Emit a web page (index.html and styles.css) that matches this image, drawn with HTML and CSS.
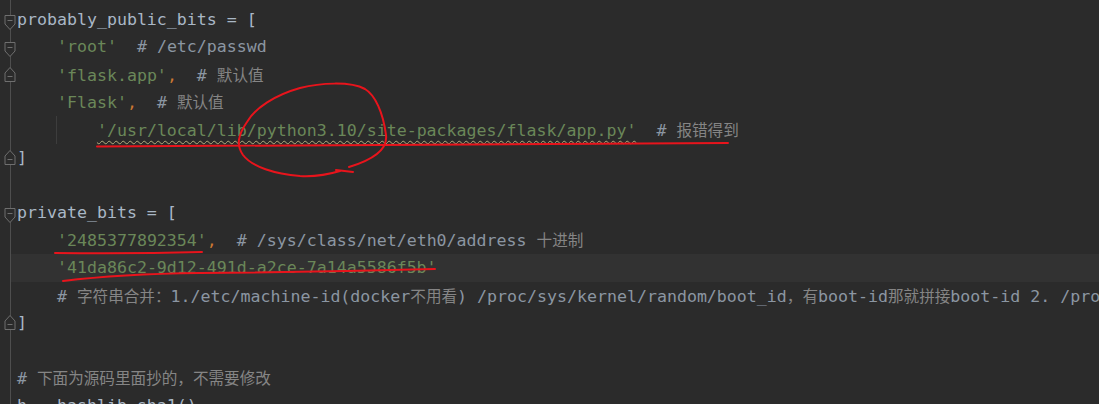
FILE: index.html
```html
<!DOCTYPE html>
<html lang="zh">
<head>
<meta charset="utf-8">
<title>editor</title>
<link rel="stylesheet" href="styles.css">
</head>
<body>
<div class="editor">
  <div class="line"><span class="fold"><svg class="mk down" width="12" height="16" viewBox="0 0 12 16"><path d="M1 0.5H11V9L6 14.5L1 9Z"/><path d="M3.5 5.5H8.5"/></svg></span><span class="code">probably_public_bits = [</span></div>
  <div class="line"><span class="fold"><svg class="mk down" width="12" height="16" viewBox="0 0 12 16"><path d="M1 0.5H11V9L6 14.5L1 9Z"/><path d="M3.5 5.5H8.5"/></svg></span><span class="code">    <span class="s">'root'</span>  <span class="c"># /etc/passwd</span></span></div>
  <div class="line"><span class="fold"><svg class="mk up" width="12" height="16" viewBox="0 0 12 16"><path d="M1 15.5H11V7L6 1.5L1 7Z"/><path d="M3.5 10.5H8.5"/></svg></span><span class="code">    <span class="s">'flask.app'</span><span class="k">,</span>  <span class="c"># <span class="zh">默认值</span></span></span></div>
  <div class="line"><span class="fold"></span><span class="code">    <span class="s">'Flask'</span><span class="k">,</span>  <span class="c"># <span class="zh">默认值</span></span></span></div>
  <div class="line guide"><span class="fold"></span><span class="code">        <span class="s warn">'/usr/local/lib/python3.10/site-packages/flask/app.py'</span>  <span class="c"># <span class="zh">报错得到</span></span></span></div>
  <div class="line"><span class="fold"><svg class="mk up" width="12" height="16" viewBox="0 0 12 16"><path d="M1 15.5H11V7L6 1.5L1 7Z"/><path d="M3.5 10.5H8.5"/></svg></span><span class="code">]</span></div>
  <div class="line"><span class="fold"></span><span class="code"></span></div>
  <div class="line"><span class="fold"><svg class="mk down" width="12" height="16" viewBox="0 0 12 16"><path d="M1 0.5H11V9L6 14.5L1 9Z"/><path d="M3.5 5.5H8.5"/></svg></span><span class="code">private_bits = [</span></div>
  <div class="line"><span class="fold"></span><span class="code">    <span class="s">'2485377892354'</span><span class="k">,</span>  <span class="c"># /sys/class/net/eth0/address <span class="zh">十进制</span></span></span></div>
  <div class="line current"><span class="fold"></span><span class="code">    <span class="s">'41da86c2-9d12-491d-a2ce-7a14a5586f5b'</span></span></div>
  <div class="line"><span class="fold"></span><span class="code">    <span class="c"># <span class="zh">字符串合并：</span>1./etc/machine-id(docker<span class="zh">不用看</span>) /proc/sys/kernel/random/boot_id<span class="zh">，有</span>boot-id<span class="zh">那就拼接</span>boot-id 2. /proc/self/cgroup</span></span></div>
  <div class="line"><span class="fold"><svg class="mk up" width="12" height="16" viewBox="0 0 12 16"><path d="M1 15.5H11V7L6 1.5L1 7Z"/><path d="M3.5 10.5H8.5"/></svg></span><span class="code">]</span></div>
  <div class="line"><span class="fold"></span><span class="code"></span></div>
  <div class="line"><span class="fold"></span><span class="code"><span class="c"># <span class="zh">下面为源码里面抄的，不需要修改</span></span></span></div>
  <div class="line"><span class="fold"></span><span class="code">h = hashlib.sha1()</span></div>

  <svg class="ink" width="1099" height="404" viewBox="0 0 1099 404">
    <path d="M97 146.5 Q 400 145 728 143"/>
    <path d="M349 167 C 372 160 388 150 386 135 C 383 112 375 95 365 89 C 350 81 320 83 300 88 C 275 95 255 108 247 122 C 238 135 236 145 243 155 C 252 167 275 174 300 176 C 318 177 330 174 340 171"/>
    <path d="M336 170 L 353 172"/>
    <path d="M55 253 Q 130 254 202 252"/>
    <path d="M63 281 Q 120 274 200 273 Q 320 272 435 269"/>
  </svg>
</div>
</body>
</html>
```

FILE: styles.css
```css
html, body {
  margin: 0;
  padding: 0;
  background: #2b2b2b;
}

.editor {
  position: relative;
  width: 1099px;
  height: 404px;
  overflow: hidden;
  padding-top: 5.6px;
  box-sizing: border-box;
  background: linear-gradient(to right, transparent 10px, #4e4e4e 10px, #4e4e4e 11px, transparent 11px);
  font-family: "DejaVu Sans Mono", "Noto Sans CJK SC", monospace;
  font-size: 16.6px;
  color: #a9b7c6;
}

.line {
  display: flex;
  height: 27.6px;
  white-space: nowrap;
}

.line.current {
  background: linear-gradient(to right, transparent 11px, #323232 11px);
}

.line.guide {
  background: linear-gradient(to right, transparent 56px, #3d3d3d 56px, #3d3d3d 57px, transparent 57px);
}

.fold {
  flex: 0 0 17px;
  width: 17px;
}

.mk {
  display: block;
  margin-left: 4px;
  fill: #2b2b2b;
  stroke: #6f6f6f;
  stroke-width: 1;
}

.mk.down {
  margin-top: 9px;
}

.mk.up {
  margin-top: 5px;
}

.code {
  white-space: pre;
  line-height: 27.6px;
}

.s {
  color: #6a8759;
}

.k {
  color: #cc7832;
}

.c {
  color: #8b96a2;
}

.zh {
  font-family: "Noto Sans CJK SC", sans-serif;
  font-size: 15.6px;
  color: #858585;
}

.warn {
  text-decoration: underline wavy #b3ad7e;
  text-decoration-thickness: 1px;
  text-underline-offset: 4px;
}

.ink {
  position: absolute;
  left: 0;
  top: 0;
  pointer-events: none;
  fill: none;
  stroke: #e8141c;
  stroke-width: 2;
  stroke-linecap: round;
}
```
